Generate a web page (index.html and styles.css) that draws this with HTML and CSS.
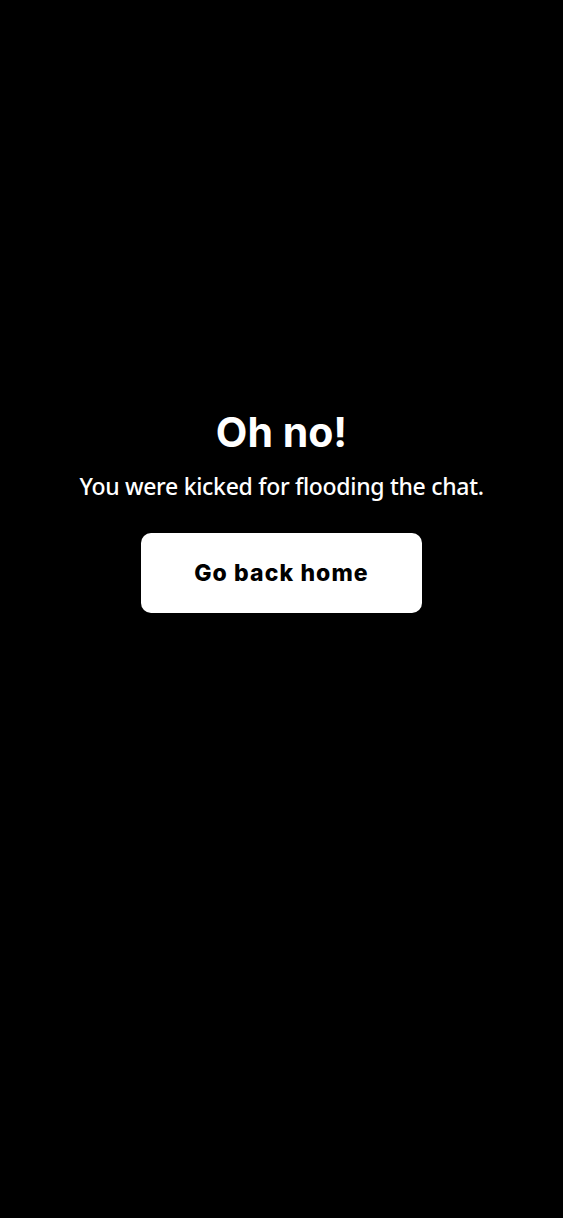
FILE: index.html
```html
<!DOCTYPE html>
<html lang="en">
<head>
<meta charset="utf-8">
<title>Kicked</title>
<link rel="stylesheet" href="styles.css">
</head>
<body>
<main class="page">
  <h1 class="title">Oh no!</h1>
  <p class="message">You were kicked for flooding the chat.</p>
  <a class="home-btn" href="#">Go back home</a>
</main>
</body>
</html>
```
FILE: styles.css
```css
html, body {
  margin: 0;
  padding: 0;
  background: #000;
  height: 100%;
}
.page {
  display: flex;
  flex-direction: column;
  align-items: center;
  padding-top: 406px;
  color: #fff;
}
.title {
  margin: 0;
  font-family: Inter, "Noto Sans", sans-serif;
  font-weight: 700;
  font-size: 41px;
  line-height: 52px;
  letter-spacing: 0;
}
.message {
  margin: 12px 0 0;
  font-family: "Noto Sans", "Open Sans", sans-serif;
  font-weight: 500;
  font-size: 23px;
  line-height: 32px;
  letter-spacing: -0.3px;
}
.home-btn {
  margin-top: 31px;
  width: 281px;
  height: 80px;
  box-sizing: border-box;
  display: flex;
  align-items: center;
  justify-content: center;
  background: #fff;
  color: #000;
  border-radius: 10px;
  text-decoration: none;
  font-family: Inter, "Noto Sans", sans-serif;
  font-weight: 800;
  font-size: 23px;
  letter-spacing: 1.1px;
}
```
